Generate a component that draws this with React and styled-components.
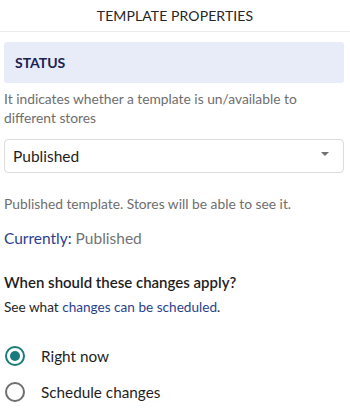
import styled, { createGlobalStyle } from 'styled-components'

const GlobalStyle = createGlobalStyle`
	body {
		margin: 0;
		background: #fff;
		font-family: Lato, 'Noto Sans', sans-serif;
	}
`

const Panel = styled.div`
	width: 350px;
	height: 414px;
	overflow: hidden;
	background: #fff;
`

const Header = styled.div`
	height: 32px;
	border-bottom: 1px solid #ececec;
	display: flex;
	align-items: center;
	justify-content: center;
	box-sizing: border-box;
	font-size: 14px;
	color: #262626;
	letter-spacing: 0.1px;
`

const Body = styled.div`
	padding: 10px 6px 0 4px;
`

const SectionTitle = styled.div`
	height: 41px;
	display: flex;
	align-items: center;
	padding: 0 11px;
	background: #e8ebf8;
	border-radius: 3px;
	font-size: 14px;
	font-weight: 700;
	color: #1a2254;
`

const Hint = styled.p`
	margin: ${(p) => p.$margin || '0'};
	font-size: ${(p) => p.$size || '14px'};
	line-height: 19px;
	color: #6e6e6e;
`

const Select = styled.div`
	margin-top: 12px;
	height: 34px;
	border: 1px solid #dcdcdc;
	border-radius: 4px;
	display: flex;
	align-items: center;
	justify-content: space-between;
	padding: 0 14px 0 8px;
	font-size: 15.5px;
	color: #1e1e1e;
	box-sizing: border-box;
`

const Caret = styled.span`
	width: 0;
	height: 0;
	border-left: 4px solid transparent;
	border-right: 4px solid transparent;
	border-top: 4px solid #707070;
	margin-top: -4px;
`

const Current = styled.div`
	margin-top: 16px;
	font-size: 15.5px;
	color: #737373;
`

const Accent = styled.span`
	color: #2c3f8e;
`

const Question = styled.div`
	margin-top: 26px;
	font-size: 15px;
	font-weight: 600;
	color: #1e1e1e;
`

const Note = styled.div`
	margin-top: 8px;
	font-size: 13.6px;
	color: #262626;
`

const Options = styled.div`
	margin-top: 31px;
	display: flex;
	flex-direction: column;
	gap: 16px;
`

const Option = styled.label`
	display: flex;
	align-items: center;
	gap: 16px;
	font-size: 15.3px;
	color: #1e1e1e;
	cursor: pointer;
`

const Radio = styled.span`
	width: 20px;
	height: 20px;
	box-sizing: border-box;
	border-radius: 50%;
	border: 2px solid ${(p) => (p.$checked ? '#197b7b' : '#6e6e6e')};
	display: flex;
	align-items: center;
	justify-content: center;
	margin-left: 1px;

	&::after {
		content: '';
		width: 10px;
		height: 10px;
		border-radius: 50%;
		background: ${(p) => (p.$checked ? '#197b7b' : 'transparent')};
	}
`

export default function App() {
	return (
		<Panel>
			<GlobalStyle />
			<Header>TEMPLATE PROPERTIES</Header>
			<Body>
				<SectionTitle>STATUS</SectionTitle>
				<Hint $margin='6px 0 0 0' $size='13.8px'>
					It indicates whether a template is un/available to different stores
				</Hint>
				<Select>
					Published
					<Caret />
				</Select>
				<Hint $margin='21px 0 0 0' $size='13.8px'>
					Published template. Stores will be able to see it.
				</Hint>
				<Current>
					<Accent>Currently:</Accent> Published
				</Current>
				<Question>When should these changes apply?</Question>
				<Note>
					See what <Accent>changes can be scheduled</Accent>.
				</Note>
				<Options>
					<Option>
						<Radio $checked />
						Right now
					</Option>
					<Option>
						<Radio />
						Schedule changes
					</Option>
				</Options>
			</Body>
		</Panel>
	)
}
